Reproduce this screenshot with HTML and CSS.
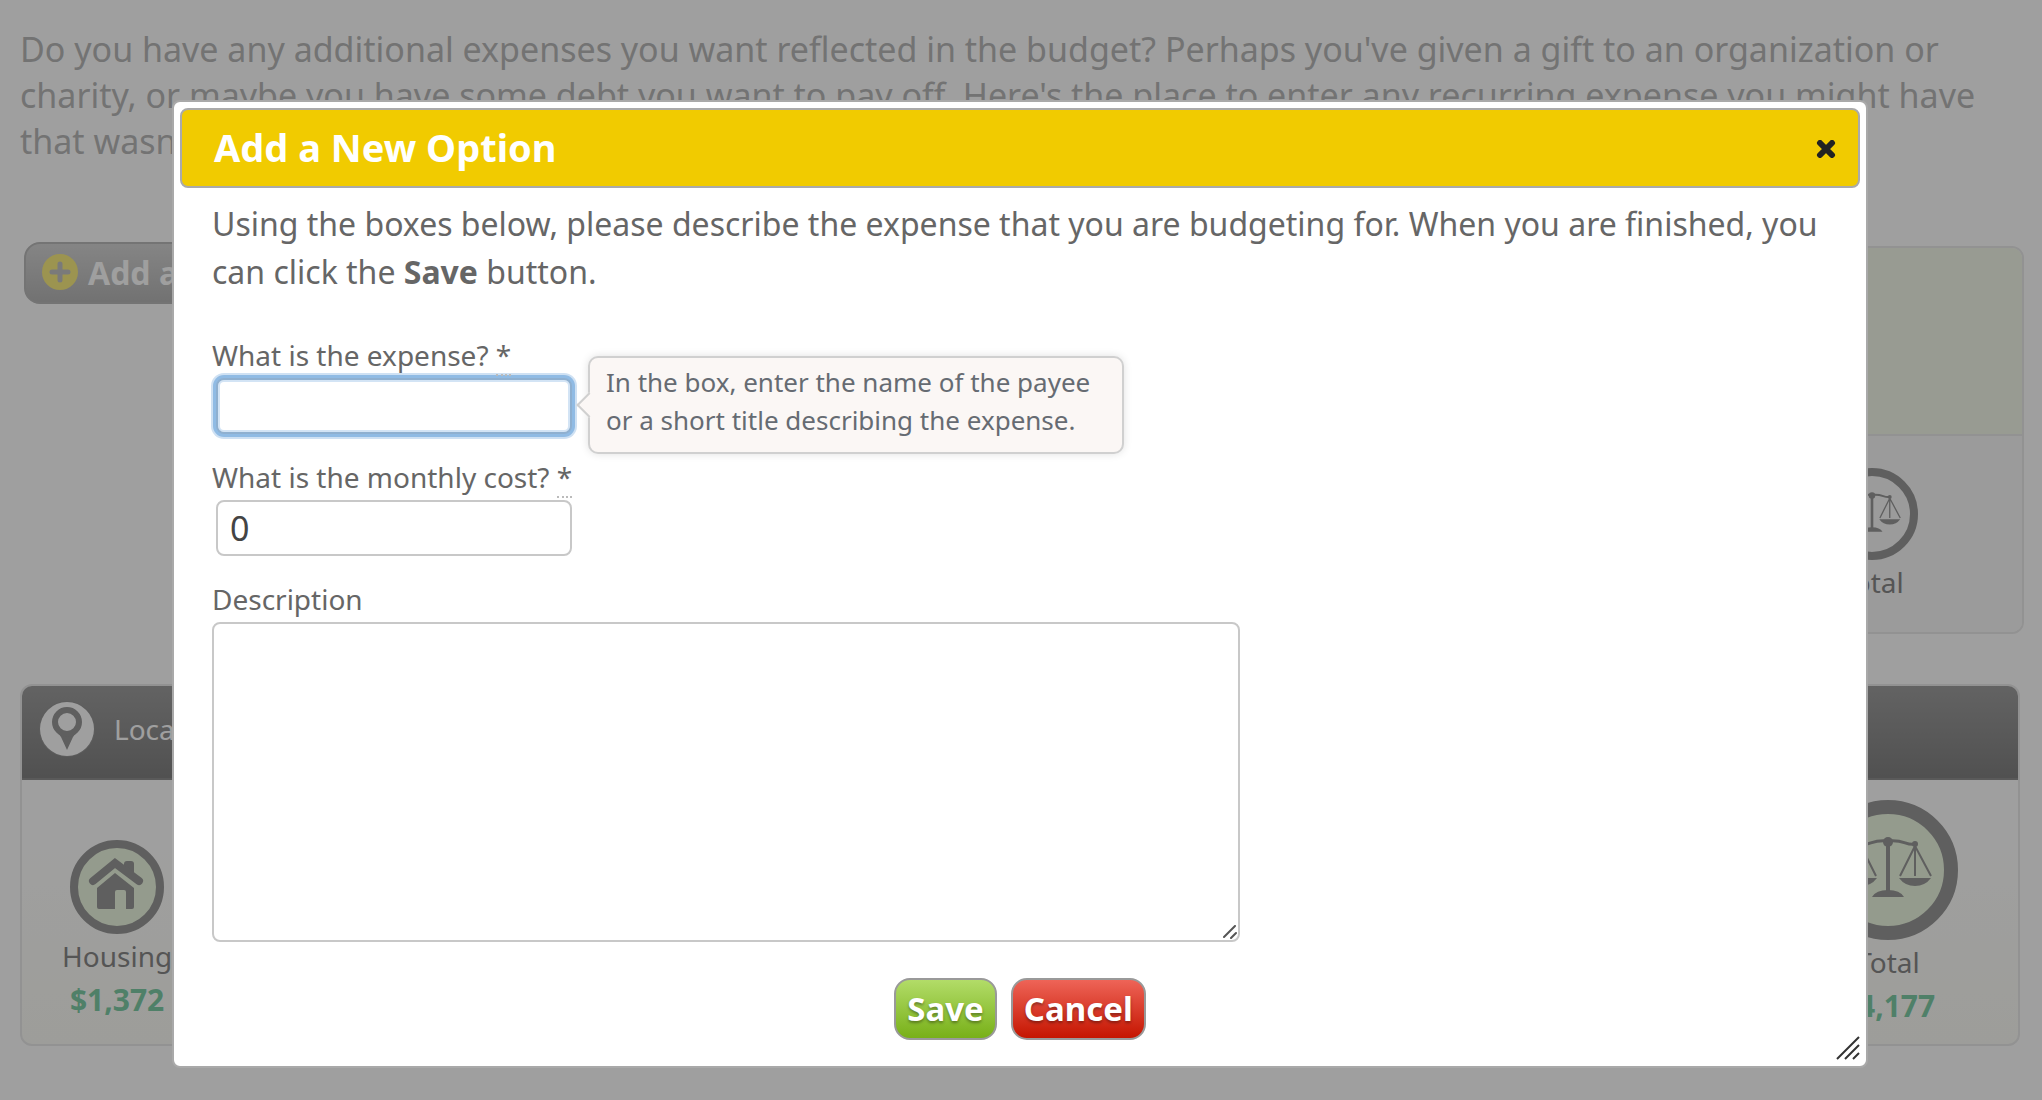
FILE: index.html
```html
<!DOCTYPE html>
<html lang="en">
<head>
  <meta charset="UTF-8">
  <meta name="viewport" content="width=device-width, initial-scale=1.0">
  <title>Budget - Additional Expenses</title>
  <link rel="stylesheet" href="styles.css">
</head>
<body>
  <!-- shared icon shapes -->
  <svg width="0" height="0" class="icon-defs" aria-hidden="true">
    <symbol id="scales" viewBox="-50 -35 100 70" overflow="visible">
      <g fill="none" stroke="currentColor" stroke-width="3">
        <path d="M0-28V22" stroke-width="4"/>
        <path d="M-27-26C-18-24-16-31 0-29C16-31 18-24 27-26"/>
        <path d="M27-24L12 6M27-24V6M27-24L43 6M-27-24L-12 6M-27-24V6M-27-24L-43 6" stroke-width="2"/>
      </g>
      <g fill="currentColor">
        <circle cx="0" cy="-28" r="5"/>
        <circle cx="27" cy="-26" r="3"/>
        <circle cx="-27" cy="-26" r="3"/>
        <path d="M11 8H43Q37 16 27 16T11 8zM-11 8H-43Q-37 16-27 16T-11 8zM-16 27Q-12 20 0 20T16 27z"/>
      </g>
    </symbol>
  </svg>

  <main class="page">
    <p class="page-intro">Do you have any additional expenses you want reflected in the budget? Perhaps you've given a gift to an organization or<br>charity, or maybe you have some debt you want to pay off. Here's the place to enter any recurring expense you might have<br>that wasn't</p>

    <div class="toolbar">
      <button type="button" class="add-button">
        <svg width="36" height="36" viewBox="0 0 36 36">
          <circle cx="18" cy="18" r="18" fill="#f8e860"/>
          <path d="M18 10V26M10 18H26" stroke="#b4b4b4" stroke-width="5" stroke-linecap="round"/>
        </svg>
        Add a
      </button>
      <section class="summary">
        <div class="summary-top"></div>
        <div class="summary-bottom">
          <div class="item">
            <svg class="ring" width="92" height="92" viewBox="-46 -46 92 92">
              <circle r="42" fill="none" stroke="currentColor" stroke-width="8"/>
              <use href="#scales" x="-33" y="-23" width="66" height="46"/>
            </svg>
            <span>Total</span>
          </div>
        </div>
      </section>
    </div>

    <section class="location">
      <header class="location-header">
        <svg width="58" height="58" viewBox="-29 -29 58 58">
          <circle r="28" fill="#7a7a7a"/>
          <circle r="27" fill="#fff"/>
          <path d="M-12 0L-6 8L0 21L6 8L12 0z" fill="#7e7e7e"/>
          <circle cy="-7" r="12" fill="#fff" stroke="#7e7e7e" stroke-width="6"/>
        </svg>
        <span>Loca</span>
      </header>
      <div class="location-body">
        <div class="item">
          <svg class="ring" width="94" height="94" viewBox="-47 -47 94 94">
            <circle r="43" fill="#e8f6da" stroke="currentColor" stroke-width="8"/>
            <g fill="currentColor">
              <path d="M7-21V-23Q7-26 10-26H14Q17-26 17-23V-9z"/>
              <path d="M-2-14L17 1V20Q17 22 15 22H9V5Q9 3 7 3H0Q-2 3-2 5V22H-18Q-20 22-20 20V1z"/>
            </g>
            <path d="M-24-6L-2-24L22-6" fill="none" stroke="currentColor" stroke-width="8" stroke-linecap="round"/>
          </svg>
          <span>Housing</span>
          <strong>$1,372</strong>
        </div>
        <div class="item total">
          <svg class="ring" width="140" height="140" viewBox="-70 -70 140 140">
            <circle r="63" fill="#e8f6da" stroke="currentColor" stroke-width="14"/>
            <use href="#scales" x="-50" y="-35" width="100" height="70"/>
          </svg>
          <span>Total</span>
          <strong>$4,177</strong>
        </div>
      </div>
    </section>
  </main>

  <div class="overlay">
    <div class="dialog" role="dialog" aria-labelledby="dialog-title">
      <header class="dialog-header">
        <h1 id="dialog-title">Add a New Option</h1>
        <button type="button" class="close" aria-label="Close">
          <svg width="20" height="18" viewBox="0 0 20 18">
            <path d="M4 3L16 15M16 3L4 15" stroke="#222" stroke-width="6" stroke-linecap="round"/>
          </svg>
        </button>
      </header>

      <form class="dialog-body">
        <p class="dialog-intro">Using the boxes below, please describe the expense that you are budgeting for. When you are finished, you can click the <strong>Save</strong> button.</p>

        <div class="field">
          <label for="expense">What is the expense? <abbr>*</abbr></label>
          <input type="text" id="expense" class="focused">
          <div class="tooltip">In the box, enter the name of the payee<br>or a short title describing the expense.</div>
        </div>

        <div class="field">
          <label for="cost">What is the monthly cost? <abbr>*</abbr></label>
          <input type="text" id="cost" value="0">
        </div>

        <div class="field">
          <label for="description">Description</label>
          <div class="textarea-wrap">
            <textarea id="description"></textarea>
            <svg class="textarea-grip" width="14" height="14" viewBox="0 0 14 14">
              <path d="M1 12L12 1M8 13L13 8" stroke="#555" stroke-width="2" stroke-linecap="round"/>
            </svg>
          </div>
        </div>

        <div class="actions">
          <button type="button" class="button save">Save</button>
          <button type="button" class="button cancel">Cancel</button>
        </div>
      </form>

      <svg class="dialog-grip" width="24" height="24" viewBox="0 0 24 24">
        <path d="M1 23L23 1M9 23L23 9M17 23L23 17" stroke="#333" stroke-width="2"/>
      </svg>
    </div>
  </div>
</body>
</html>
```
FILE: styles.css
```css
:root {
  --border: #c8c8c8;
  --text: #666;
  --text-light: #a6a6a6;
  --icon: #7e7e7e;
}

* {
  margin: 0;
  padding: 0;
  box-sizing: border-box;
}

body {
  font-family: 'Noto Sans', 'Open Sans', sans-serif;
  font-size: 28px;
  color: var(--text);
  background: #fff;
}

button,
input,
textarea {
  font-family: inherit;
}

svg {
  display: block;
  flex: none;
}

.icon-defs {
  position: absolute;
}

/* Page behind the dialog */
.page {
  padding: 26px 18px 54px 20px;
}

.page-intro {
  font-size: 34px;
  line-height: 46px;
  color: var(--text-light);
  white-space: nowrap;
}

.toolbar {
  display: flex;
  justify-content: space-between;
  align-items: flex-start;
  margin-top: 78px;
}

.add-button {
  display: flex;
  align-items: center;
  gap: 10px;
  height: 62px;
  margin-left: 4px;
  padding: 0 16px 2px;
  border: 2px solid #a8a8a8;
  border-radius: 16px;
  background: linear-gradient(#cacaca, #a4a4a4);
  color: #fff;
  font-size: 32px;
  font-weight: bold;
}

.summary {
  width: 75%;
  margin-top: 4px;
  border: 2px solid #e4e4e4;
  border-radius: 12px;
  overflow: hidden;
}

.summary-top {
  height: 186px;
  background: #f0f6e4;
}

.summary-bottom {
  display: flex;
  justify-content: flex-end;
  height: 198px;
  padding: 32px 104px 0 0;
  border-top: 2px solid #e4e4e4;
  background: #f6f6f6;
}

.item {
  display: flex;
  flex-direction: column;
  align-items: center;
  line-height: 44px;
  color: #6a6a6a;
}

.item strong {
  font-size: 30px;
  color: #5ec090;
}

.ring {
  color: var(--icon);
}

.location {
  margin: 50px 4px 0 0;
  border: 2px solid #e4e4e4;
  border-radius: 12px;
  background: linear-gradient(#fff 40%, #fbfbf4);
  overflow: hidden;
}

.location-header {
  display: flex;
  align-items: center;
  gap: 18px;
  height: 94px;
  padding: 0 16px 6px;
  border-bottom: 2px solid #747474;
  background: linear-gradient(#868686, #626262);
  color: #fff;
}

.location-body {
  display: flex;
  justify-content: space-between;
  align-items: flex-end;
  height: 264px;
  padding: 0 60px 16px 40px;
}

.location-body .item {
  padding-bottom: 6px;
}

.location-body .total {
  padding-bottom: 0;
}

/* Dialog */
.overlay {
  position: fixed;
  inset: 0;
  padding: 100px 174px 0 172px;
  background: rgba(64, 64, 64, 0.5);
}

.dialog {
  position: relative;
  border: 2px solid #a9a9a9;
  border-radius: 8px;
  background: #fff;
}

.dialog-header {
  display: flex;
  justify-content: space-between;
  align-items: center;
  height: 80px;
  margin: 6px;
  padding: 0 22px 2px 32px;
  border: 2px solid #aaa;
  border-radius: 8px;
  background: #f1cb00;
}

.dialog-header h1 {
  font-size: 38px;
  line-height: 48px;
  color: #fff;
}

.close {
  padding: 4px 0 0;
  border: none;
  background: none;
}

.dialog-body {
  padding: 6px 38px 26px;
}

.dialog-intro {
  margin-bottom: 39px;
  font-size: 32px;
  line-height: 48px;
}

.field {
  position: relative;
  margin-bottom: 23px;
}

label {
  display: block;
  margin-bottom: 3px;
  line-height: 40px;
}

abbr {
  border-bottom: 2px dotted #bbb;
}

input,
textarea {
  display: block;
  border: 2px solid var(--border);
  border-radius: 8px;
  background: #fff;
  color: #444;
  font-size: 34px;
}

input {
  width: 356px;
  height: 56px;
  margin-left: 4px;
  padding: 0 12px;
}

input.focused {
  border-color: #8fb0d0;
  box-shadow: 0 0 0 3px #90bbe4, 0 0 0 5px #cfe1f3, inset 0 0 0 2px #d3e4f5;
}

.textarea-wrap {
  position: relative;
  width: 1028px;
}

textarea {
  width: 100%;
  height: 320px;
  padding: 12px;
  resize: none;
}

.textarea-grip {
  position: absolute;
  right: 3px;
  bottom: 3px;
}

.tooltip {
  position: absolute;
  top: 21px;
  left: 376px;
  padding: 5px 32px 13px 16px;
  border: 2px solid #d0d0d0;
  border-radius: 10px;
  background: #fbf7f5;
  box-shadow: 0 0 8px rgba(0, 0, 0, 0.12);
  color: #666b72;
  font-size: 26px;
  line-height: 38px;
  white-space: nowrap;
}

.tooltip::before {
  content: '';
  position: absolute;
  top: 38px;
  left: -10px;
  width: 16px;
  height: 16px;
  border: solid #d0d0d0;
  border-width: 0 0 2px 2px;
  background: #fbf7f5;
  transform: rotate(45deg);
}

.actions {
  display: flex;
  justify-content: center;
  gap: 14px;
  margin-top: 36px;
}

.button {
  height: 62px;
  padding: 0 11px 2px;
  border: 2px solid #999;
  border-radius: 16px;
  color: #fff;
  font-size: 33px;
  font-weight: bold;
  text-shadow: 0 2px 3px rgba(0, 0, 0, 0.35);
}

.save {
  background: linear-gradient(#b2dc68, #78b018);
}

.cancel {
  background: linear-gradient(#ee6457, #c51500);
}

.dialog-grip {
  position: absolute;
  right: 6px;
  bottom: 6px;
}
```
